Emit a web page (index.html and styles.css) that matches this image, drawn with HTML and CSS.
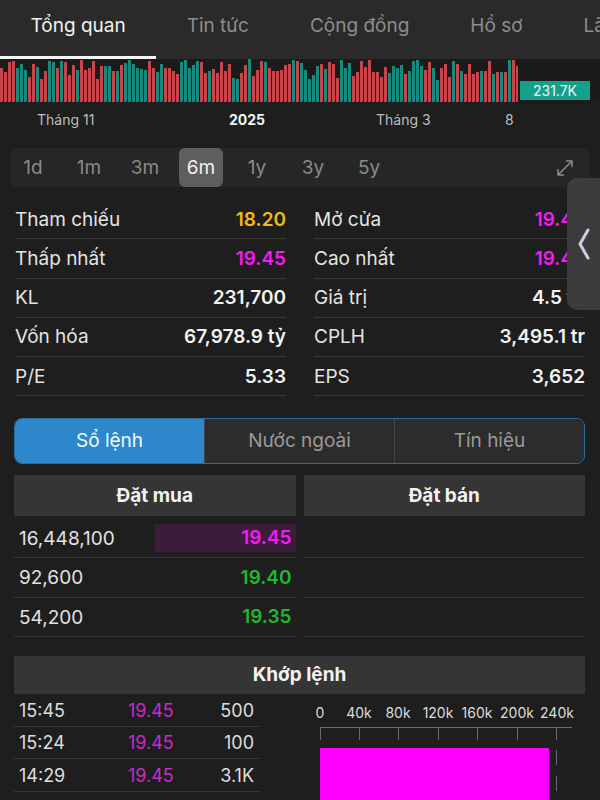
FILE: index.html
```html
<!DOCTYPE html>
<html lang="vi">
  <head>
    <meta charset="UTF-8" />
    <meta name="viewport" content="width=device-width, initial-scale=1.0" />
    <title>Tổng quan</title>
    <link rel="stylesheet" href="styles.css">
  </head>
  <body>
    <div class="tabs">
      <div class="tab active">Tổng quan</div>
      <div class="tab">Tin tức</div>
      <div class="tab">Cộng đồng</div>
      <div class="tab">Hồ sơ</div>
      <div class="tab">Lãnh đạo</div>
    </div>

    <div class="chart">
      <div class="bars" id="bars"></div>
      <span class="vol-badge">231.7K</span>
    </div>
    <div class="axis">
      <span style="left: 37px">Tháng 11</span>
      <span class="year" style="left: 229px">2025</span>
      <span style="left: 376px">Tháng 3</span>
      <span style="left: 505px">8</span>
    </div>

    <div class="periods">
      <span class="period">1d</span>
      <span class="period">1m</span>
      <span class="period">3m</span>
      <span class="period selected">6m</span>
      <span class="period">1y</span>
      <span class="period">3y</span>
      <span class="period">5y</span>
      <svg class="expand" width="20" height="20" viewBox="0 0 20 20">
        <path d="M3 17 L17 3 M11.5 3 H17 V8.5 M3 11.5 V17 H8.5" fill="none" stroke="#8c8c8c" stroke-width="1.5" stroke-linecap="round" stroke-linejoin="round" />
      </svg>
    </div>

    <div class="stats">
      <div class="stat"><span>Tham chiếu</span><b class="yellow">18.20</b></div>
      <div class="stat"><span>Mở cửa</span><b class="pink">19.45</b></div>
      <div class="stat"><span>Thấp nhất</span><b class="pink">19.45</b></div>
      <div class="stat"><span>Cao nhất</span><b class="pink">19.45</b></div>
      <div class="stat"><span>KL</span><b>231,700</b></div>
      <div class="stat"><span>Giá trị</span><b>4.5 tỷ</b></div>
      <div class="stat"><span>Vốn hóa</span><b>67,978.9 tỷ</b></div>
      <div class="stat"><span>CPLH</span><b>3,495.1 tr</b></div>
      <div class="stat"><span>P/E</span><b>5.33</b></div>
      <div class="stat"><span>EPS</span><b>3,652</b></div>
    </div>

    <div class="side-handle">
      <svg width="14" height="32" viewBox="0 0 14 32">
        <path d="M11 2 L3 16 L11 30" fill="none" stroke="#d3cce0" stroke-width="3" stroke-linecap="round" stroke-linejoin="round" />
      </svg>
    </div>

    <div class="segment">
      <div class="seg active">Sổ lệnh</div>
      <div class="seg">Nước ngoài</div>
      <div class="seg">Tín hiệu</div>
    </div>

    <div class="book">
      <div class="book-col">
        <div class="book-head">Đặt mua</div>
        <div class="book-row"><span>16,448,100</span><b class="pink hot">19.45</b></div>
        <div class="book-row"><span>92,600</span><b class="green">19.40</b></div>
        <div class="book-row"><span>54,200</span><b class="green">19.35</b></div>
      </div>
      <div class="book-col">
        <div class="book-head">Đặt bán</div>
        <div class="book-row"></div>
        <div class="book-row"></div>
        <div class="book-row"></div>
      </div>
    </div>

    <div class="match-head">Khớp lệnh</div>
    <div class="match">
      <div class="trades">
        <div class="trade"><span>15:45</span><span class="price">19.45</span><span class="qty">500</span></div>
        <div class="trade"><span>15:24</span><span class="price">19.45</span><span class="qty">100</span></div>
        <div class="trade"><span>14:29</span><span class="price">19.45</span><span class="qty">3.1K</span></div>
      </div>
      <svg class="vol-chart" width="285" height="106" viewBox="0 0 285 106">
        <g class="ticks-text">
          <text x="20" y="24">0</text>
          <text x="59" y="24">40k</text>
          <text x="98" y="24">80k</text>
          <text x="138" y="24">120k</text>
          <text x="177" y="24">160k</text>
          <text x="217" y="24">200k</text>
          <text x="257" y="24">240k</text>
        </g>
        <g stroke="#6a6a6a" stroke-width="1">
          <path d="M20 33.5 H272" />
          <path d="M20.5 33 V46 M59.5 33 V46 M98.5 33 V46 M138.5 33 V46 M177.5 33 V46 M217.5 33 V46 M256.5 33 V46" />
          <path d="M256.5 56 V71 M256.5 82 V97" />
        </g>
        <rect x="20" y="54" width="229" height="60" fill="#ff00ff" />
      </svg>
    </div>

    <script src="script.js"></script>
  </body>
</html>
```

FILE: styles.css
```css
body {
  margin: 0;
  width: 600px;
  height: 800px;
  overflow: hidden;
  position: relative;
  background: #1e1e1e;
  color: #e4e4e4;
  font-family: Inter, "Noto Sans", sans-serif;
}

b {
  font-weight: 600;
}

.yellow {
  color: #f0bc12;
}

.pink {
  color: #f21cf2;
}

.green {
  color: #21b82a;
}

/* top tabs */
.tabs {
  display: flex;
  height: 59px;
  background: #2a2a2a;
  white-space: nowrap;
  overflow: hidden;
}

.tab {
  padding: 0 30.5px;
  font-size: 19px;
  line-height: 52px;
  color: #8d8d8d;
  border-bottom: 3px solid transparent;
  box-sizing: border-box;
  height: 59px;
}

.tab.active {
  color: #f2f2f2;
  border-bottom-color: #f5f5f5;
}

/* volume chart */
.chart {
  position: relative;
  height: 43px;
  background: #1b1b1b;
}

.bars {
  display: flex;
  align-items: flex-end;
  gap: 1.5px;
  height: 43px;
  width: 518px;
  overflow: hidden;
}

.bar {
  flex: 0 0 2.5px;
}

.bar.up {
  background: #168a7c;
}

.bar.down {
  background: #c9454b;
}

.vol-badge {
  position: absolute;
  right: 10px;
  bottom: 2px;
  width: 70px;
  height: 19px;
  background: #15a08c;
  color: #e9f7f4;
  font-size: 14px;
  line-height: 19px;
  text-align: center;
}

.axis {
  position: relative;
  height: 38px;
  font-size: 14px;
  color: #bdbdbd;
}

.axis span {
  position: absolute;
  top: 9px;
}

.axis .year {
  color: #f2f2f2;
  font-weight: 700;
}

/* period selector */
.periods {
  display: flex;
  align-items: center;
  gap: 12px;
  margin: 8px 10px 0;
  padding-left: 1px;
  height: 39px;
  background: #262626;
  border-radius: 8px;
}

.period {
  width: 44px;
  height: 39px;
  line-height: 39px;
  text-align: center;
  font-size: 19px;
  color: #8a8a8a;
  border-radius: 6px;
}

.period.selected {
  background: #5e5e5e;
  color: #f2f2f2;
}

.expand {
  margin-left: auto;
  margin-right: 15px;
}

/* key figures */
.stats {
  display: grid;
  grid-template-columns: 1fr 1fr;
  column-gap: 28px;
  margin-top: 13px;
  padding: 0 15px;
}

.stat {
  display: flex;
  justify-content: space-between;
  align-items: center;
  box-sizing: border-box;
  height: 39.25px;
  border-bottom: 1px solid #383838;
  font-size: 19px;
}

.stat b {
  color: #f2f2f2;
}

.stat b.yellow {
  color: #f0bc12;
}

.stat b.pink {
  color: #f21cf2;
}

.side-handle {
  position: absolute;
  top: 178px;
  right: 0;
  width: 33px;
  height: 132px;
  background: #3c3c3c;
  border-radius: 10px 0 0 10px;
  display: flex;
  align-items: center;
  justify-content: center;
}

/* segmented control */
.segment {
  display: flex;
  margin: 22px 15px 0 14px;
  height: 46px;
  border: 1px solid #2a6e9e;
  border-radius: 8px;
  overflow: hidden;
  box-sizing: border-box;
}

.seg {
  flex: 1;
  text-align: center;
  line-height: 44px;
  font-size: 19px;
  color: #9a9a9a;
  background: #2c2c2c;
  border-left: 1px solid #444;
}

.seg.active {
  background: #2c88ca;
  color: #f4f8fb;
  border-left: none;
}

/* order book */
.book {
  display: grid;
  grid-template-columns: 1fr 1fr;
  gap: 8px;
  margin: 11px 15px 0 14px;
}

.book-head {
  height: 41px;
  line-height: 41px;
  text-align: center;
  background: #353535;
  font-size: 19px;
  font-weight: 700;
  color: #f2f2f2;
  margin-bottom: 2.5px;
}

.book-row {
  display: grid;
  grid-template-columns: 1fr 1fr;
  align-items: center;
  box-sizing: border-box;
  height: 39.5px;
  border-bottom: 1px solid #353535;
  font-size: 19px;
  color: #e2e2e2;
}

.book-row span {
  padding-left: 5px;
}

.book-row b {
  text-align: right;
  padding-right: 4px;
  height: 28px;
  line-height: 28px;
}

.book-row b.hot {
  background: #3b1d3b;
}

/* matched trades */
.match-head {
  margin: 19px 15px 0 14px;
  height: 38px;
  line-height: 38px;
  text-align: center;
  background: #353535;
  font-size: 19px;
  font-weight: 700;
  color: #f2f2f2;
}

.match {
  display: flex;
  gap: 40px;
  margin-left: 14px;
}

.trades {
  width: 246px;
}

.trade {
  display: grid;
  grid-template-columns: 114px 1fr 1fr;
  align-items: center;
  box-sizing: border-box;
  height: 32.5px;
  border-bottom: 1px solid #363636;
  font-size: 18px;
  color: #dedede;
}

.trade span:first-child {
  padding-left: 5px;
}

.trade .price {
  color: #c62dc6;
}

.trade .qty {
  text-align: right;
  padding-right: 6px;
}

.ticks-text text {
  font-family: Inter, "Noto Sans", sans-serif;
  font-size: 14px;
  fill: #dcdcdc;
  text-anchor: middle;
}
```

FILE: script.js
```js
// daily volume bars for the mini chart
let bars = document.getElementById("bars");
let seed = 11;

function rand() {
  seed = (seed * 9301 + 49297) % 233280;
  return seed / 233280;
}

let up = true;
for (let i = 0; i < 130; i++) {
  if (rand() > 0.6) {
    up = !up;
  }
  let bar = document.createElement("div");
  bar.className = "bar " + (up ? "up" : "down");
  let h = rand() > 0.25 ? 30 + rand() * 13 : 22 + rand() * 10;
  bar.style.height = Math.round(h) + "px";
  bars.appendChild(bar);
}
```
